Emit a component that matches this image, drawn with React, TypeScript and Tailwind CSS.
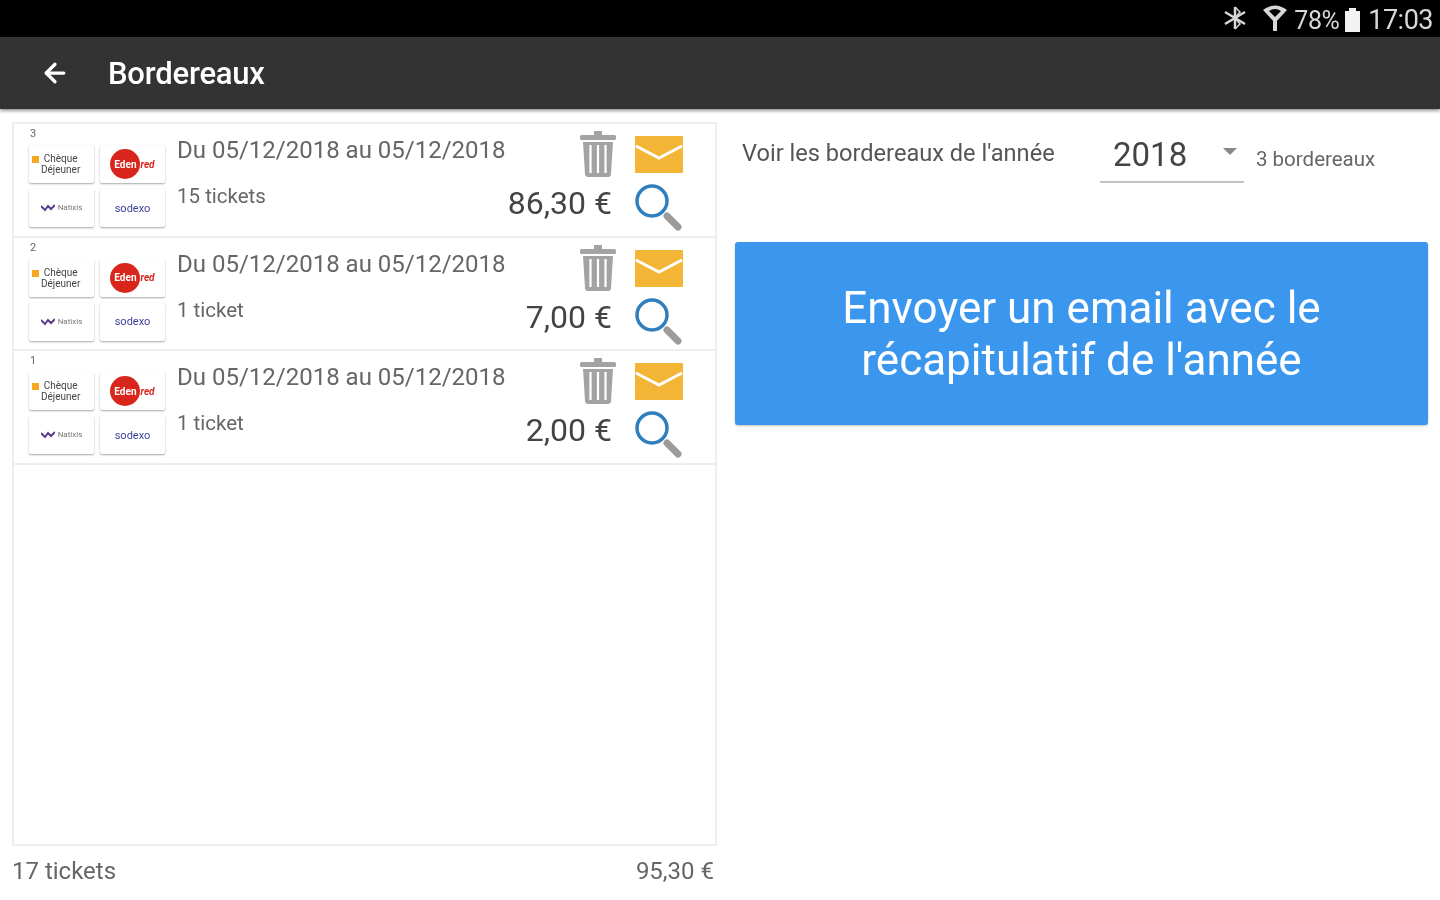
import { ArrowLeft } from 'lucide-react';

const ROWS = [
  { index: 3, tickets: '15 tickets', amount: '86,30 €' },
  { index: 2, tickets: '1 ticket', amount: '7,00 €' },
  { index: 1, tickets: '1 ticket', amount: '2,00 €' },
];

function LogoCard({ children }: { children: React.ReactNode }) {
  return (
    <div className="flex h-[38px] w-[65px] items-center justify-center overflow-hidden rounded-[2px] bg-white shadow-[0_1px_2px_rgba(0,0,0,0.35)]">
      {children}
    </div>
  );
}

function Logos() {
  return (
    <div className="grid w-[136px] grid-cols-[65px_65px] gap-x-[6px] gap-y-[6px]">
      <LogoCard>
        <div className="flex w-full items-start gap-[2px] pl-[3px]">
          <span className="mt-[3px] h-[7px] w-[7px] shrink-0 bg-[#f5a623]" />
          <span className="text-center text-[10px] leading-[11px] text-[#444]">
            Chèque
            <br />
            Déjeuner
          </span>
        </div>
      </LogoCard>
      <LogoCard>
        <div className="flex items-center">
          <span className="flex h-[30px] w-[30px] items-center justify-center rounded-full bg-[#d9261c] text-[10px] font-bold text-white">
            Eden
          </span>
          <span className="text-[10px] font-bold italic text-[#d9261c]">red</span>
        </div>
      </LogoCard>
      <LogoCard>
        <div className="flex items-center gap-[3px]">
          <svg width="14" height="8" viewBox="0 0 14 8">
            <path d="M0 2 L4 6 L7 2 L10 5 L14 1" fill="none" stroke="#5b3f8c" strokeWidth="2" />
          </svg>
          <span className="text-[8px] leading-none text-[#777]">Natixis</span>
        </div>
      </LogoCard>
      <LogoCard>
        <span className="text-[11px] leading-none text-[#3c3f9c]">sodexo</span>
      </LogoCard>
    </div>
  );
}

function TrashIcon() {
  return (
    <svg width="36" height="48" viewBox="0 0 36 48" className="block">
      <path d="M14 1 h8 v4 h-8 z" fill="#a3a3a3" />
      <rect x="0" y="5" width="36" height="5" rx="1.500" fill="#a3a3a3" />
      <path d="M3 12 h30 l-2 32 q-0.2 3 -3 3 h-20 q-2.800 0 -3 -3 z" fill="#a3a3a3" />
      <path d="M10.500 15 v28 M18 15 v28 M25.500 15 v28" stroke="#fff" strokeWidth="2.200" />
    </svg>
  );
}

function MailIcon() {
  return (
    <svg width="48" height="37" viewBox="0 0 48 37" className="block">
      <rect width="48" height="37" rx="1" fill="#f2b535" />
      <path d="M1 10 L24 22 L47 10" fill="none" stroke="#fff" strokeWidth="3" />
    </svg>
  );
}

function SearchIcon() {
  return (
    <svg width="48" height="48" viewBox="0 0 48 48" className="block">
      <circle cx="17" cy="17" r="15" fill="none" stroke="#2f7fbe" strokeWidth="3.500" />
      <path d="M32 32 L43 43" stroke="#9b9b9b" strokeWidth="7" strokeLinecap="round" />
    </svg>
  );
}

function Row({ index, tickets, amount }: { index: number; tickets: string; amount: string }) {
  return (
    <div className="flex h-[113.5px] border-b-2 border-[#eeeeee] pl-[15px]">
      <div className="w-[148px] shrink-0">
        <div className="h-[21px] pl-[1px] text-[11px] leading-[19px] text-[#666]">{index}</div>
        <Logos />
      </div>
      <div className="w-[330px] shrink-0 pt-[9px] text-[#666]">
        <div className="whitespace-nowrap text-[24px] leading-[34px]">Du 05/12/2018 au 05/12/2018</div>
        <div className="mt-[14px] text-[20.500px] leading-[30px]">{tickets}</div>
      </div>
      <div className="flex w-[105px] shrink-0 flex-col items-end pt-[6px]">
        <div className="mr-[-4px]"><TrashIcon /></div>
        <div className="mt-[3px] whitespace-nowrap text-[32px] leading-[44px] text-[#444]">{amount}</div>
      </div>
      <div className="ml-[23px] flex shrink-0 flex-col pt-[12px]">
        <MailIcon />
        <div className="mt-[11px]"><SearchIcon /></div>
      </div>
    </div>
  );
}

export default function App() {
  return (
    <div className="flex h-[900px] w-[1440px] flex-col overflow-hidden bg-white font-['Roboto',sans-serif] blur-[0.7px]">
      <div className="flex h-[37px] shrink-0 items-center justify-end gap-[6px] bg-black pb-[2px] pr-[7px] text-[#d8d8d8]">
        <svg width="24" height="26" viewBox="0 0 24 26" fill="none" stroke="#d8d8d8" strokeWidth="2.500" className="mr-[9px]">
          <path d="M12 2 V24 M2 7 L22 19 M22 7 L2 19" />
          <path d="M12 2 L17 7 L12 13 L17 19 L12 24" strokeWidth="1.500" />
        </svg>
        <svg width="26" height="28" viewBox="0 0 26 28">
          <path d="M1 6 Q13 -3 25 6 L13 19 Z" fill="#d8d8d8" />
          <path d="M7 7 Q13 3 19 7 L13 13 Z" fill="#000" />
          <rect x="11" y="16" width="4" height="11" fill="#d8d8d8" />
        </svg>
        <span className="mt-[5px] text-[25px] leading-none tracking-[-0.5px]">78%</span>
        <svg width="15" height="24" viewBox="0 0 15 24" className="mt-[4px]">
          <path d="M4 0 h7 v3 h4 v21 h-15 v-21 h4 z" fill="#f2f2f2" />
        </svg>
        <span className="ml-[2px] mt-[5px] text-[27px] leading-none tracking-[-0.5px]">17:03</span>
      </div>

      <div className="z-10 flex h-[72px] shrink-0 items-center bg-[#333333] pl-[40px] shadow-[0_2px_3px_rgba(0,0,0,0.4)]">
        <ArrowLeft size={30} strokeWidth={2.600} className="text-white" />
        <h1 className="ml-[38px] mt-[3px] text-[31px] font-medium tracking-[-0.2px] text-white">Bordereaux</h1>
      </div>

      <div className="flex min-h-0 flex-1">
        <div className="flex w-[717px] shrink-0 flex-col pl-[12px] pt-[13px]">
          <div className="h-[724px] w-[705px] border-2 border-[#eeeeee]">
            {ROWS.map((row) => (
              <Row key={row.index} {...row} />
            ))}
          </div>
          <div className="mt-[8px] flex w-[702px] justify-between text-[24px] leading-[34px] text-[#666]">
            <span>17 tickets</span>
            <span>95,30 €</span>
          </div>
        </div>

        <div className="ml-[18px] flex-1 pr-[12px] pt-[27px]">
          <div className="flex h-[48px] items-start pl-[7px]">
            <span className="w-[358px] whitespace-nowrap text-[23.600px] leading-[34px] text-[#555]">Voir les bordereaux de l'année</span>
            <div className="relative h-[47px] w-[144px] border-b-2 border-[#c4c4c4] pl-[13px] text-[33px] leading-[38px] text-[#444]">
              2018
              <span className="absolute right-[7px] top-[12px] h-0 w-0 border-x-[7px] border-t-[7px] border-x-transparent border-t-[#888]" />
            </div>
            <span className="ml-[12px] mt-[8px] text-[20.500px] leading-[30px] text-[#666]">3 bordereaux</span>
          </div>
          <button className="mt-[58px] flex h-[183px] w-[693px] items-center justify-center rounded-[3px] bg-[#3b96ee] text-center text-[44px] leading-[52px] text-white shadow-[0_1px_2px_rgba(0,0,0,0.25)]">
            Envoyer un email avec le
            <br />
            récapitulatif de l'année
          </button>
        </div>
      </div>
    </div>
  );
}
